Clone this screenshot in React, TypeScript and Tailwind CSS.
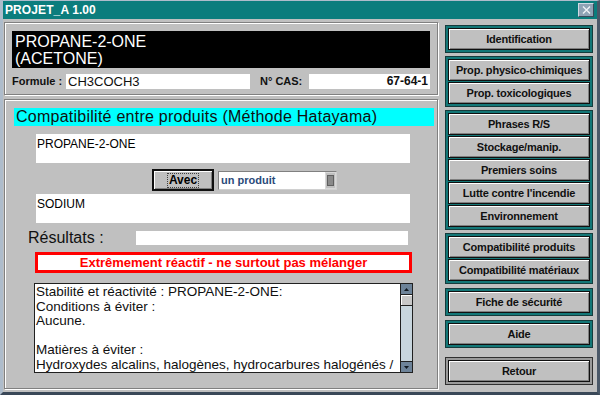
import React from "react";

const font = { fontFamily: '"Liberation Sans", Arial, sans-serif' };

const SideButton = ({ label }: { label: string }) => (
  <div className="h-[22px] flex items-center justify-center bg-[#c0c0c0] border border-[#101010] shadow-[inset_1px_1px_0_#ffffff,inset_-1px_-1px_0_#808080] text-[11px] font-bold text-[#101010] tracking-[-0.2px]">
    {label}
  </div>
);

const Group = ({ labels, gray }: { labels: string[]; gray?: boolean }) => (
  <div
    className={
      gray
        ? "border border-[#303030] bg-[#9a9a9a] p-[2px] flex flex-col gap-[1px]"
        : "border border-[#163c3c] bg-[#137777] p-[2px] flex flex-col gap-[1px]"
    }
  >
    {labels.map((l) => (
      <SideButton key={l} label={l} />
    ))}
  </div>
);

export default function App() {
  return (
    <div
      style={font}
      className="w-[600px] h-[395px] bg-[#c0c0c0] flex flex-col border-l-[3px] border-t-[1px] border-r-[3px] border-b-[3px] border-l-[#aebccb] border-t-[#aebccb] border-r-[#4a5868] border-b-[#3a4858] overflow-hidden"
    >
      {/* title bar */}
      <div className="h-[18px] bg-[#0b7d7d] flex items-center justify-between pl-[2px] pr-[3px] shrink-0">
        <span className="text-white text-[12px] font-bold tracking-[0.1px]">PROJET_A 1.00</span>
        <div className="w-[16px] h-[14px] bg-[#8fa3b5] border border-t-[#d0dae4] border-l-[#d0dae4] border-r-[#3a4a5a] border-b-[#3a4a5a] flex items-center justify-center">
          <svg width="9" height="8" viewBox="0 0 9 8">
            <path d="M1 0.5 L8 7.5 M8 0.5 L1 7.5" stroke="#eef2f6" strokeWidth="1.4" />
          </svg>
        </div>
      </div>

      <div className="flex flex-1 pt-[3px] pl-[1px] pr-[4px] pb-[3px] gap-[7px]">
        {/* left column */}
        <div className="w-[434px] flex flex-col gap-[4px]">
          <div className="h-[73px] border border-[#808080] shadow-[inset_1px_1px_0_#ffffff,1px_1px_0_#ffffff] px-[7px] pt-[8px]">
            <div className="h-[37px] bg-black text-white text-[16px] leading-[16px] pl-[3px] pt-[3px]">
              <div>PROPANE-2-ONE</div>
              <div className="mt-[1px]">(ACETONE)</div>
            </div>
            <div className="flex items-center mt-[5px] text-[11px] font-bold text-[#101010]">
              <span className="w-[54px]">Formule :</span>
              <div className="w-[184px] h-[15px] bg-white flex items-center pl-[2px] text-[13px] font-normal">CH3COCH3</div>
              <span className="ml-[10px] w-[49px]">N° CAS:</span>
              <div className="flex-1 h-[15px] bg-white flex items-center justify-end pr-[2px] text-[12px]">67-64-1</div>
            </div>
          </div>

          <div className="flex-1 border border-[#808080] shadow-[inset_1px_1px_0_#ffffff,1px_1px_0_#ffffff] pl-[9px] pr-[3px] pt-[8px] flex flex-col">
            <div className="h-[18px] bg-[#00ffff] text-[16px] leading-[18px] text-[#101010] pl-[2px] tracking-[0.25px]">
              Compatibilité entre produits (Méthode Hatayama)
            </div>
            <div className="ml-[22px] w-[374px] h-[29px] bg-white mt-[8px] text-[12px] pl-[1px] pt-[1px]">PROPANE-2-ONE</div>
            <div className="flex items-center mt-[6px] ml-[138px] gap-[4px]">
              <div className="w-[62px] h-[22px] border-2 border-[#101010] bg-[#c0c0c0] shadow-[inset_1px_1px_0_#ffffff,inset_-1px_-1px_0_#808080] flex items-center justify-center">
                <span className="text-[12px] font-bold outline outline-1 outline-dotted outline-[#404040] px-[1px] leading-[13px]">Avec</span>
              </div>
              <div className="w-[119px] h-[19px] bg-white border border-[#808080] border-r-[#d0d0d0] border-b-[#d0d0d0] flex items-center">
                <span className="flex-1 text-[11px] font-bold text-[#2a4a7a] pl-[2px]">un produit</span>
                <div className="w-[11px] h-[17px] bg-[#c0c0c0] border border-[#d8d8d8] flex items-center justify-center">
                  <div className="w-[7px] h-[11px] bg-[#8a8a8a] border border-[#606060]" />
                </div>
              </div>
            </div>
            <div className="ml-[22px] w-[374px] h-[29px] bg-white mt-[3px] text-[12px] pl-[1px] pt-[1px]">SODIUM</div>
            <div className="flex items-center h-[15px] mt-[7px]">
              <span className="ml-[14px] w-[108px] text-[16px] leading-[15px] text-[#101010]">Résultats :</span>
              <div className="w-[272px] h-[14px] bg-white" />
            </div>
            <div className="ml-[21px] w-[377px] h-[21px] border-[3px] border-[#ff0000] bg-white flex items-center justify-center mt-[7px] text-[13px] font-bold text-[#ff0000]">
              Extrêmement réactif - ne surtout pas mélanger
            </div>
            <div className="ml-[20px] w-[379px] h-[90px] mt-[10px] border border-[#202020] bg-white flex">
              <div className="flex-1 text-[13.5px] leading-[14.5px] text-[#101010] pl-[1px] pt-[1px] overflow-hidden whitespace-nowrap">
                <div>Stabilité et réactivité : PROPANE-2-ONE:</div>
                <div>Conditions à éviter :</div>
                <div>Aucune.</div>
                <div>&nbsp;</div>
                <div>Matières à éviter :</div>
                <div>Hydroxydes alcalins, halogènes, hydrocarbures halogénés /</div>
              </div>
              <div className="w-[12px] flex flex-col border-l border-[#202020] bg-[#c8d6de]">
                <div className="h-[11px] bg-[#6d8399] border-b border-[#202020] flex items-center justify-center">
                  <svg width="5" height="3" viewBox="0 0 5 3"><path d="M0 3 L2.5 0 L5 3 Z" fill="#101820" /></svg>
                </div>
                <div className="h-[11px] bg-[#c8c8c8] border-b border-[#202020] shadow-[inset_1px_1px_0_#ffffff]" />
                <div className="flex-1" />
                <div className="h-[11px] bg-[#6d8399] border-t border-[#202020] flex items-center justify-center">
                  <svg width="5" height="3" viewBox="0 0 5 3"><path d="M0 0 L2.5 3 L5 0 Z" fill="#101820" /></svg>
                </div>
              </div>
            </div>
          </div>
        </div>

        {/* right column */}
        <div className="flex-1 flex flex-col gap-[3px] pt-[3px]">
          <Group labels={["Identification"]} />
          <Group labels={["Prop. physico-chimiques", "Prop. toxicologiques"]} />
          <Group
            labels={["Phrases R/S", "Stockage/manip.", "Premiers soins", "Lutte contre l'incendie", "Environnement"]}
          />
          <Group labels={["Compatibilité produits", "Compatibilité matériaux"]} />
          <div className="mt-[1px]">
            <Group labels={["Fiche de sécurité"]} />
          </div>
          <div className="mt-[1px]">
            <Group labels={["Aide"]} />
          </div>
          <div className="mt-[6px]">
            <Group labels={["Retour"]} gray />
          </div>
        </div>
      </div>
    </div>
  );
}
